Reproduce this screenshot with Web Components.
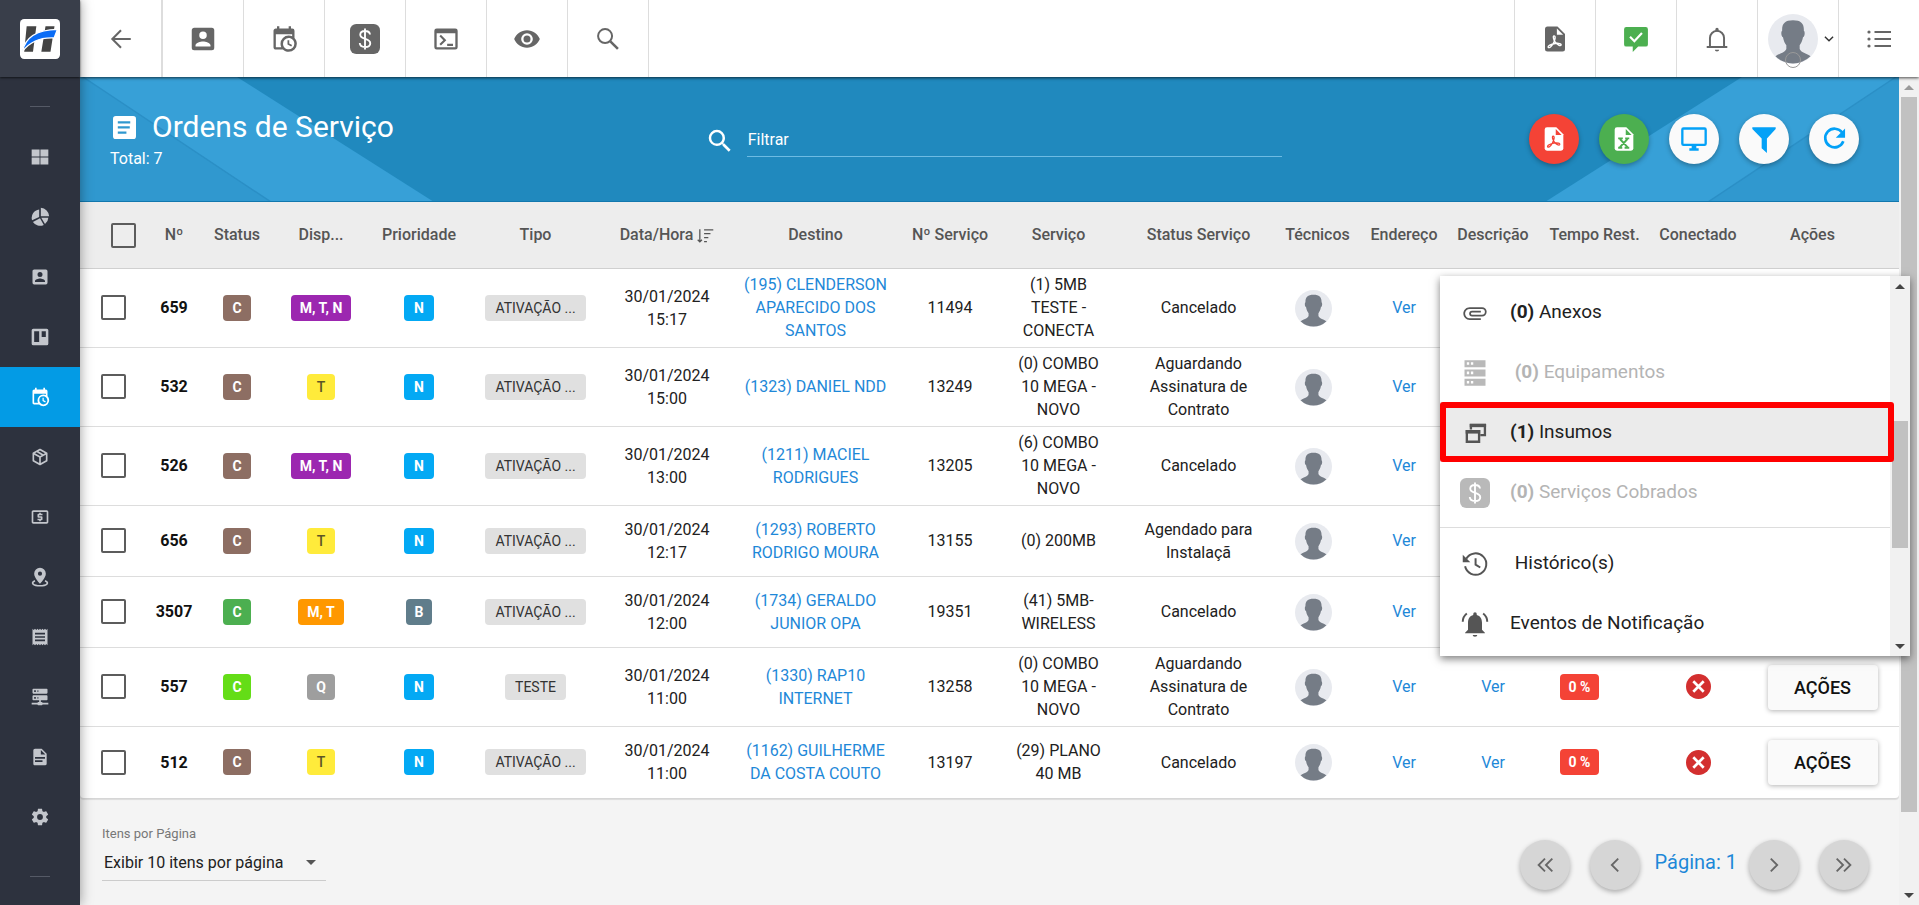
<!DOCTYPE html>
<html lang="pt-BR">
<head>
<meta charset="utf-8">
<meta name="viewport" content="width=device-width, initial-scale=1">
<title>Ordens de Serviço</title>
<style>
  * { box-sizing: border-box; }
  body {
    margin: 0;
    height: 100vh;
    overflow: hidden;
    display: grid;
    grid-template-columns: 80px 1fr;
    grid-template-rows: 77px 1fr;
    background: #f4f4f4;
    color: #212121;
    font: 16px/23px Roboto, "Noto Sans", sans-serif;
  }
  side-nav { grid-row: 1 / 3; z-index: 3; }
  top-bar { z-index: 2; }
  .view { display: flex; min-height: 0; min-width: 0; }
  main { flex: 1; min-width: 0; overflow: hidden; }
</style>
</head>
<body>
  <side-nav></side-nav>
  <top-bar></top-bar>
  <div class="view">
    <main>
      <page-banner heading="Ordens de Serviço" total="7">
        <round-button slot="actions" icon="pdf" label="Exportar PDF" style="--bg:#f44336;--fg:#fff;--cut:#f44336"></round-button>
        <round-button slot="actions" icon="excel" label="Exportar Excel" style="--bg:#4caf50;--fg:#fff;--cut:#4caf50"></round-button>
        <round-button slot="actions" icon="monitor" label="Monitor"></round-button>
        <round-button slot="actions" icon="filter" label="Filtros"></round-button>
        <round-button slot="actions" icon="refresh" label="Atualizar"></round-button>
      </page-banner>
      <orders-table></orders-table>
      <page-footer page="1"></page-footer>
    </main>
    <scroll-rail before="0" thumb="714" after="73" top-idle></scroll-rail>
  </div>

  <actions-menu>
    <menu-entry icon="clip"><b>(0)</b> Anexos</menu-entry>
    <menu-entry icon="server" disabled>&nbsp;<b>(0)</b> Equipamentos</menu-entry>
    <menu-entry icon="copies" current><b>(1)</b> Insumos</menu-entry>
    <menu-entry icon="money" icon-size="30" disabled><b>(0)</b> Serviços Cobrados</menu-entry>
    <hr>
    <menu-entry icon="history">&nbsp;Histórico(s)</menu-entry>
    <menu-entry icon="bellring">Eventos de Notificação</menu-entry>
  </actions-menu>

<script>
// Icon set, all drawn on a 24x24 grid
const ICONS = {
  back: '<path d="M21 12H4M12 4l-8 8 8 8" fill="none" stroke="currentColor" stroke-width="1.9"/>',
  account: '<path d="M6,17C6,15 10,13.9 12,13.9C14,13.9 18,15 18,17V18H6M15,9A3,3 0 0,1 12,12A3,3 0 0,1 9,9A3,3 0 0,1 12,6A3,3 0 0,1 15,9M3,5V19A2,2 0 0,0 5,21H19A2,2 0 0,0 21,19V5A2,2 0 0,0 19,3H5C3.89,3 3,3.9 3,5Z"/>',
  calendar: '<path d="M15,13H16.5V15.82L18.94,17.23L18.19,18.53L15,16.69V13M19,8H5V19H9.67C9.24,18.09 9,17.07 9,16A7,7 0 0,1 16,9C17.07,9 18.09,9.24 19,9.67V8M5,21C3.89,21 3,20.1 3,19V5C3,3.89 3.89,3 5,3H6V1H8V3H16V1H18V3H19A2,2 0 0,1 21,5V11.1C22.24,12.36 23,14.09 23,16A7,7 0 0,1 16,23C14.09,23 12.36,22.24 11.1,21H5M16,11.15A4.85,4.85 0 0,0 11.15,16C11.15,18.68 13.32,20.85 16,20.85A4.85,4.85 0 0,0 20.85,16C20.85,13.32 18.68,11.15 16,11.15Z"/>',
  money: '<rect width="24" height="24" rx="5"/><path d="M16 8.4C15.8 6.6 14.2 5.6 12 5.6S8.2 6.8 8.2 8.6c0 4.2 8 2.4 8 6.7 0 1.9-1.7 3.1-4.1 3.1-2.5 0-4.2-1.200-4.300-3.200M12 3.600v16.800" fill="none" stroke="#fff" stroke-width="1.500"/>',
  terminal: '<path d="M20 3H4a2 2 0 0 0-2 2v14a2 2 0 0 0 2 2h16a2 2 0 0 0 2-2V5a2 2 0 0 0-2-2zm0 16H4V7h16z"/><path d="M7 9l4 4-4 4M13 17h5" fill="none" stroke="currentColor" stroke-width="1.800"/>',
  eye: '<path d="M12,9A3,3 0 0,0 9,12A3,3 0 0,0 12,15A3,3 0 0,0 15,12A3,3 0 0,0 12,9M12,17A5,5 0 0,1 7,12A5,5 0 0,1 12,7A5,5 0 0,1 17,12A5,5 0 0,1 12,17M12,4.5C7,4.5 2.73,7.61 1,12C2.73,16.39 7,19.5 12,19.5C17,19.5 21.27,16.39 23,12C21.27,7.61 17,4.5 12,4.5Z"/>',
  search: '<circle cx="9.500" cy="9.500" r="6" fill="none" stroke="currentColor" stroke-width="1.700"/><path d="M14 14l6.500 6.500" stroke="currentColor" stroke-width="2.200"/>',
  magnify: '<path d="M9.5,3A6.5,6.5 0 0,1 16,9.5C16,11.11 15.41,12.59 14.44,13.73L14.71,14H15.5L20.5,19L19,20.5L14,15.5V14.71L13.73,14.44C12.59,15.41 11.11,16 9.5,16A6.5,6.5 0 0,1 3,9.5A6.5,6.5 0 0,1 9.5,3M9.5,5C7,5 5,7 5,9.5C5,12 7,14 9.5,14C12,14 14,12 14,9.5C14,7 12,5 9.5,5Z"/>',
  pdf: '<path d="M6 2h8l6 6v12a2 2 0 0 1-2 2H6a2 2 0 0 1-2-2V4a2 2 0 0 1 2-2z"/><path d="M13.500 3.500v5h5z" fill="var(--cut,#fff)"/><path d="M11.200 9.500c1.600 0 .9 3.400-.6 6.100-1.300 2.300-3.300 4-4 3.100-.8-1 2.200-2.600 5.400-3.100 3.100-.5 5.300.2 4.900 1.200-.5 1.100-3.200-.2-4.700-2.300-1.500-2-2-5-1-5z" fill="none" stroke="var(--cut,#fff)" stroke-width="1.100"/>',
  excel: '<path d="M6 2h8l6 6v12a2 2 0 0 1-2 2H6a2 2 0 0 1-2-2V4a2 2 0 0 1 2-2z"/><path d="M13.500 3.500v5h5z" fill="var(--cut)"/><path d="M8.500 12l6.500 7M15 12l-6.500 7M7 11.500h4M13 11.500h3.500M7 19.500h3.500M12.500 19.500h4" fill="none" stroke="var(--cut)" stroke-width="1.600"/>',
  monitor: '<path d="M21 2H3a2 2 0 0 0-2 2v12a2 2 0 0 0 2 2h7v2H8v2h8v-2h-2v-2h7a2 2 0 0 0 2-2V4a2 2 0 0 0-2-2zm0 14H3V4h18z"/>',
  filter: '<path d="M2 2h20v1.500l-7.500 8V24L10 20v-8.500l-8-8z"/>',
  refresh: '<path d="M19 6.500A8 8 0 1 0 20 14" fill="none" stroke="currentColor" stroke-width="2.300"/><path d="M21.500 3v8h-8z"/>',
  chat: '<path d="M3 1h18a2 2 0 0 1 2 2v14a2 2 0 0 1-2 2h-7l-5 5v-5H3a2 2 0 0 1-2-2V3a2 2 0 0 1 2-2z"/><path d="M6.500 10l4 4 7-7.500" fill="none" stroke="#fff" stroke-width="2"/>',
  bell: '<path d="M5.500 18.500V11a6.500 6.500 0 0 1 13 0v7.500M2.500 19.400h19" fill="none" stroke="currentColor" stroke-width="1.800"/><path d="M10.500 3a1.500 1.500 0 0 1 3 0v2h-3zM10 22h4a2 1.500 0 0 1-4 0z"/>',
  list: '<path d="M7.500 5H24M7.500 12H24M7.500 19H24" stroke="currentColor" stroke-width="1.800"/><circle cx="2" cy="5" r="1.600"/><circle cx="2" cy="12" r="1.600"/><circle cx="2" cy="19" r="1.600"/>',
  chevron: '<path d="M5 8l7 7 7-7" fill="none" stroke="currentColor" stroke-width="2.400"/>',
  grid: '<path d="M2 3h9.500v8.500H2zM12.500 3H22v8.500h-9.500zM2 12.500h9.500V21H2zM12.500 12.500H22V21h-9.500z"/>',
  pie: '<path d="M13 1a10.500 10.500 0 0 1 10 10H13zM11 3v9l-8.500 4A10 10 0 0 1 11 3zM12 13.500l4.500 8A10 10 0 0 1 3.500 18zM13.500 13H22a10 10 0 0 1-4 7.500z"/>',
  board: '<path d="M4,2H20A2,2 0 0,1 22,4V20A2,2 0 0,1 20,22H4A2,2 0 0,1 2,20V4A2,2 0 0,1 4,2M5,5V18H11V5M14,5V12H19V5Z" fill-rule="evenodd"/>',
  box: '<path d="M21,16.5C21,16.88 20.79,17.21 20.47,17.38L12.57,21.82C12.41,21.94 12.21,22 12,22C11.79,22 11.59,21.94 11.43,21.82L3.53,17.38C3.21,17.21 3,16.88 3,16.5V7.5C3,7.12 3.21,6.79 3.53,6.62L11.43,2.18C11.59,2.06 11.79,2 12,2C12.21,2 12.41,2.06 12.57,2.18L20.47,6.62C20.79,6.79 21,7.12 21,7.5V16.5M12,4.15L10.11,5.22L16,8.61L17.96,7.5L12,4.15M6.04,7.5L12,10.85L13.96,9.75L8.08,6.35L6.04,7.5M5,15.91L11,19.29V12.58L5,9.21V15.91M19,15.91V9.21L13,12.58V19.29L19,15.91Z"/>',
  cash: '<path d="M11 17h2v-1h1c.55 0 1-.45 1-1v-3c0-.55-.45-1-1-1h-3v-1h4V8h-2V7h-2v1h-1c-.55 0-1 .45-1 1v3c0 .55.45 1 1 1h3v1H9v2h2v1zm9-13H4c-1.110 0-1.990.890-1.990 2L2 18c0 1.110.890 2 2 2h16c1.110 0 2-.890 2-2V6c0-1.110-.890-2-2-2zm0 14H4V6h16v12z"/>',
  pin: '<path d="M12 1a7 7 0 0 0-7 7c0 5 7 12 7 12s7-7 7-12a7 7 0 0 0-7-7zm0 9.500a2.500 2.500 0 1 1 0-5 2.500 2.500 0 0 1 0 5z"/><path d="M6 16.500c-6 2.500-2 6 6 6s12-3.500 6-6" fill="none" stroke="currentColor" stroke-width="2"/>',
  receipt: '<path d="M18 17H6v-2h12v2zm0-4H6v-2h12v2zm0-4H6V7h12v2zM3 22l1.500-1.500L6 22l1.500-1.500L9 22l1.500-1.500L12 22l1.500-1.500L15 22l1.500-1.500L18 22l1.500-1.500L21 22V2l-1.500 1.500L18 2l-1.500 1.500L15 2l-1.500 1.500L12 2l-1.500 1.500L9 2 7.500 3.500 6 2 4.500 3.500 3 2v20z"/>',
  network: '<path d="M13,18H14A1,1 0 0,1 15,19H22V21H15A1,1 0 0,1 14,22H10A1,1 0 0,1 9,21H2V19H9A1,1 0 0,1 10,18H11V16H4A1,1 0 0,1 3,15V11A1,1 0 0,1 4,10H20A1,1 0 0,1 21,11V15A1,1 0 0,1 20,16H13V18M4,2H20A1,1 0 0,1 21,3V7A1,1 0 0,1 20,8H4A1,1 0 0,1 3,7V3A1,1 0 0,1 4,2M9,6H10V4H9V6M9,14H10V12H9V14M5,4V6H7V4H5M5,12V14H7V12H5Z"/>',
  document: '<path d="M13,9H18.5L13,3.5V9M6,2H14L20,8V20A2,2 0 0,1 18,22H6C4.89,22 4,21.1 4,20V4C4,2.89 4.89,2 6,2M15,18V16H6V18H15M18,14V12H6V14H18Z"/>',
  gear: '<path d="M12,15.5A3.5,3.5 0 0,1 8.5,12A3.5,3.5 0 0,1 12,8.5A3.5,3.5 0 0,1 15.5,12A3.5,3.5 0 0,1 12,15.5M19.43,12.97C19.47,12.65 19.5,12.33 19.5,12C19.5,11.67 19.47,11.34 19.43,11L21.54,9.37C21.73,9.22 21.78,8.95 21.66,8.73L19.66,5.27C19.54,5.05 19.27,4.96 19.05,5.05L16.56,6.05C16.04,5.66 15.5,5.32 14.87,5.07L14.5,2.42C14.46,2.18 14.25,2 14,2H10C9.75,2 9.54,2.18 9.5,2.42L9.13,5.07C8.5,5.32 7.96,5.66 7.44,6.05L4.95,5.05C4.73,4.96 4.46,5.05 4.34,5.27L2.34,8.73C2.21,8.95 2.27,9.22 2.46,9.37L4.57,11C4.53,11.34 4.5,11.67 4.5,12C4.5,12.33 4.53,12.65 4.57,12.97L2.46,14.63C2.27,14.78 2.21,15.05 2.34,15.27L4.34,18.73C4.46,18.95 4.73,19.03 4.95,18.95L7.44,17.94C7.96,18.34 8.5,18.68 9.13,18.93L9.5,21.58C9.54,21.82 9.75,22 10,22H14C14.25,22 14.46,21.82 14.5,21.58L14.87,18.93C15.5,18.67 16.04,18.34 16.56,17.94L19.05,18.95C19.27,19.03 19.54,18.95 19.66,18.73L21.66,15.27C21.78,15.05 21.73,14.78 21.54,14.63L19.43,12.97Z"/>',
  article: '<path d="M3 0h18a3 3 0 0 1 3 3v18a3 3 0 0 1-3 3H3a3 3 0 0 1-3-3V3a3 3 0 0 1 3-3zM5 5.500v2.200h13V5.500zM5 10.800V13h12.500v-2.200zM5 16.200v2.200h9v-2.200z" fill-rule="evenodd"/>',
  sort: '<path d="M4 3v18M1 18l3 3 3-3M10 4h13M10 9.500h9M10 15h6M10 20.500h4" fill="none" stroke="currentColor" stroke-width="1.800"/>',
  clip: '<path d="M2,12.5C2,9.46 4.46,7 7.5,7H18A4,4 0 0,1 22,11A4,4 0 0,1 18,15H9.5A2.5,2.5 0 0,1 7,12.5A2.5,2.5 0 0,1 9.5,10H17V11.5H9.5A1,1 0 0,0 8.5,12.5A1,1 0 0,0 9.5,13.5H18A2.5,2.5 0 0,0 20.5,11A2.5,2.5 0 0,0 18,8.5H7.5A4,4 0 0,0 3.5,12.5A4,4 0 0,0 7.5,16.5H17V18H7.5C4.46,18 2,15.54 2,12.5Z"/>',
  server: '<path d="M3 1h18v6H3zM3 9h18v6H3zM3 17h18v6H3z"/><path d="M5 2.800h2v2.200H5zM8.500 2.800h2v2.200h-2zM5 10.800h2V13H5zM8.500 10.800h2V13h-2zM5 18.800h2V21H5zM8.500 18.800h2V21h-2z" fill="#fff"/>',
  copies: '<path d="M8.500 9V5.200h12v8.600h-4" fill="none" stroke="currentColor" stroke-width="2"/><path d="M7.500 4h14v3h-14z"/><path d="M5 10.500h10.500v9H5z" fill="none" stroke="currentColor" stroke-width="2"/><path d="M4 9.500h12.500v3H4z"/>',
  history: '<path d="M4.500 7.500A9.200 9.200 0 1 1 3.500 14M12.500 7v5.500l4 2.500" fill="none" stroke="currentColor" stroke-width="1.700"/><path d="M1.500 4v6.500H8z"/>',
  bellring: '<path d="M12 2a1.500 1.500 0 0 1 1.500 1.500v.7c3 .7 4.500 3.300 4.500 6.800v6l2.500 2.500v.5h-17v-.500L6 17v-6c0-3.500 1.500-6.100 4.500-6.800v-.700A1.500 1.500 0 0 1 12 2zM10 21.500h4a2 1.500 0 0 1-4 0z"/><path d="M1.500 10c0-3 1-5 3.500-7M22.500 10c0-3-1-5-3.500-7" fill="none" stroke="currentColor" stroke-width="1.700"/>',
  offline: '<circle cx="12" cy="12" r="12" fill="#d32f2f"/><path d="M7 7l10 10M17 7L7 17" stroke="#fff" stroke-width="2.600"/>',
  avatar: '<circle cx="12" cy="12" r="12" fill="#e8eaef"/><path d="M12 3c4 0 5.400 1.800 5.200 5 .6.300.6 2.600-.4 3.200-.3 1.800-1 3-1.600 3.800v1.800c.8 1.900 3.600 2.200 5.200 3.500a12 12 0 0 1-16.800 0c1.600-1.300 4.400-1.600 5.200-3.500V15c-.7-.8-1.300-2-1.600-3.800-1-.6-1-2.900-.4-3.200C6.600 4.800 8 3 12 3z" fill="#757c86"/>',
  left: '<path d="M15.500 5l-7 7 7 7" fill="none" stroke="currentColor" stroke-width="2"/>',
  right: '<path d="M8.500 5l7 7-7 7" fill="none" stroke="currentColor" stroke-width="2"/>',
  first: '<path d="M12 5l-7 7 7 7M20 5l-7 7 7 7" fill="none" stroke="currentColor" stroke-width="2"/>',
  last: '<path d="M4 5l7 7-7 7M12 5l7 7-7 7" fill="none" stroke="currentColor" stroke-width="2"/>',
  logo: '<rect width="24" height="24" rx="2.500" fill="#fff"/><path d="M4 4.300h5.800L7.800 19.600H2.500zM15.300 4.300h5.400L18.300 19.600h-5.500z" fill="#444"/><path d="M1.500 19.500C3 11.500 9 6.500 22.500 6.200l-2 5.200C12 11 6 13.500 1.500 19.500z" fill="#0a6cf5" stroke="#fff" stroke-width=".8"/>',
};

const BASE = '*{box-sizing:border-box} a{color:inherit;text-decoration:none} button{font:inherit;color:inherit;background:none;border:0;padding:0;cursor:pointer}';

function mount(el, html) {
  el.attachShadow({ mode: 'open' }).innerHTML = html;
}

/** <app-icon name size> */
class AppIcon extends HTMLElement {
  connectedCallback() {
    if (this.shadowRoot) return;
    const size = this.getAttribute('size') || 24;
    mount(this, `
      <style>:host { display: inline-flex; flex: none; } svg { display: block; fill: currentColor; }</style>
      <svg width="${size}" height="${size}" viewBox="0 0 24 24" aria-hidden="true">${ICONS[this.getAttribute('name')]}</svg>`);
  }
}

/** Round floating button used by the banner and the pager */
class RoundButton extends HTMLElement {
  connectedCallback() {
    if (this.shadowRoot) return;
    mount(this, `
      <style>${BASE}
        :host { display: block; }
        button {
          width: 50px; height: 50px; border-radius: 50%;
          display: grid; place-items: center;
          background: var(--bg, #fafafa); color: var(--fg, #03a1f7);
          box-shadow: 0 2px 5px rgba(0,0,0,.3);
        }
      </style>
      <button type="button" aria-label="${this.getAttribute('label')}">
        <app-icon name="${this.getAttribute('icon')}" size="${this.getAttribute('size') || 28}"></app-icon>
      </button>`);
  }
}

/** Drawn scrollbar; before/thumb/after are relative lengths */
class ScrollRail extends HTMLElement {
  connectedCallback() {
    if (this.shadowRoot) return;
    const at = n => this.getAttribute(n);
    mount(this, `
      <style>
        :host { display: flex; flex-direction: column; flex: none; width: 20px; background: #f1f1f1; }
        .arrow { height: 20px; display: grid; place-items: center; }
        .arrow::before { content: ""; border: 5px solid transparent; border-top: 0; border-bottom-color: #444; }
        .arrow.down::before { border: 5px solid transparent; border-bottom: 0; border-top-color: #444; }
        :host([top-idle]) .arrow.up::before { border-bottom-color: #999; }
        .thumb { background: #c1c1c1; margin: 0 2px; }
      </style>
      <div class="arrow up"></div>
      <div style="flex:${at('before')}"></div>
      <div class="thumb" style="flex:${at('thumb')}"></div>
      <div style="flex:${at('after')}"></div>
      <div class="arrow down"></div>`);
  }
}

class SideNav extends HTMLElement {
  connectedCallback() {
    const items = [
      ['grid', 'Painel'], ['pie', 'Relatórios'], ['account', 'Clientes'], ['board', 'Quadro'],
      ['calendar', 'Ordens de Serviço'], ['box', 'Estoque'], ['cash', 'Financeiro'], ['pin', 'Mapa'],
      ['receipt', 'Faturas'], ['network', 'Rede'], ['document', 'Documentos'], ['gear', 'Configurações'],
    ];
    mount(this, `
      <style>${BASE}
        :host { display: flex; flex-direction: column; background: #2d323e; color: #c3c6cc; box-shadow: 0 0 12px rgba(0,0,0,.4); min-height: 0; }
        .brand { flex: none; height: 77px; display: grid; place-items: center; background: #393e4a; box-shadow: 0 1px 2px rgba(0,0,0,.6); }
        nav { flex: 1; padding-top: 29px; overflow: hidden; }
        hr { width: 20px; margin: 0 auto 20px; border: 0; border-top: 1px solid #555a66; }
        .end { margin-top: 29px; }
        a { height: 60px; display: grid; place-items: center; }
        .on { background: #039be5; color: #fff; }
      </style>
      <a class="brand" href="#" aria-label="Início"><app-icon name="logo" size="40"></app-icon></a>
      <nav>
        <hr>
        ${items.map(([icon, label], i) =>
          `<a href="#" aria-label="${label}"${i === 4 ? ' class="on"' : ''}><app-icon name="${icon}" size="20"></app-icon></a>`).join('')}
        <hr class="end">
      </nav>`);
  }
}

class TopBar extends HTMLElement {
  connectedCallback() {
    const left = [['back', 26], ['account', 30], ['calendar', 28], ['money', 30], ['terminal', 28], ['eye', 28], ['search', 28]];
    mount(this, `
      <style>${BASE}
        :host { display: flex; justify-content: space-between; background: #fff; color: #666; box-shadow: 0 1px 3px rgba(0,0,0,.7); }
        div { display: flex; }
        button { width: 81px; display: flex; align-items: center; justify-content: center; border-right: 1px solid #ddd; }
        button:first-child { width: 83px; border-right-width: 2px; }
        .end button { width: 81px; border: 0; border-left: 1px solid #ddd; }
        .ok { color: #4caf50; }
        .end .user { gap: 4px; justify-content: flex-start; padding-left: 10px; color: #333; }
        .face { display: grid; justify-items: center; align-items: end; }
        .face > * { grid-area: 1 / 1; }
        .ring { width: 16px; height: 16px; margin-bottom: -4px; border: 1px solid #999; border-radius: 50%; }
      </style>
      <div>${left.map(([n, s]) => `<button type="button" aria-label="${n}"><app-icon name="${n}" size="${s}"></app-icon></button>`).join('')}</div>
      <div class="end">
        <button type="button" aria-label="PDF"><app-icon name="pdf" size="30"></app-icon></button>
        <button type="button" aria-label="Mensagens" class="ok"><app-icon name="chat" size="26"></app-icon></button>
        <button type="button" aria-label="Notificações"><app-icon name="bell" size="26"></app-icon></button>
        <button type="button" aria-label="Usuário" class="user">
          <span class="face"><app-icon name="avatar" size="50"></app-icon><span class="ring"></span></span>
          <app-icon name="chevron" size="14"></app-icon>
        </button>
        <button type="button" aria-label="Lista"><app-icon name="list" size="24"></app-icon></button>
      </div>`);
  }
}

class PageBanner extends HTMLElement {
  connectedCallback() {
    // Diagonal stripes hug each side of the banner; the right one is mirrored
    const stripes = `
      <path d="M0 0L4 0L191 125H0z" fill="#3098cf"/>
      <path d="M3 0H157L354 125H191z" fill="#37a0d7"/>
      <path d="M3 0L191 125" stroke="#2b8fc6" stroke-width="1.500"/>`;
    mount(this, `
      <style>${BASE}
        :host { display: grid; height: 125px; background: #2089be; color: #fff; border-bottom: 1px solid #1278ae; }
        .art, .row { grid-area: 1 / 1; }
        .art { display: flex; justify-content: space-between; overflow: hidden; }
        .art .flip { transform: scaleX(-1); }
        .row { z-index: 1; display: grid; grid-template-columns: 34fr 33fr 33fr; align-items: center; padding: 0 40px 0 30px; }
        h1 { display: flex; align-items: center; gap: 16px; margin: 0 0 4px; padding-left: 3px; font-size: 30px; line-height: 36px; font-weight: 400; }
        p { margin: 0; line-height: 20px; }
        label { display: flex; align-items: center; gap: 12px; padding-top: 4px; }
        input { flex: 1; min-width: 0; height: 32px; padding: 0 0 2px 1px; border: 0; border-bottom: 1px solid #6dbbe3; outline: 0; background: none; color: #fff; font: inherit; }
        input::placeholder { color: #fff; opacity: 1; }
        .tools { display: flex; justify-content: flex-end; gap: 20px; }
      </style>
      <div class="art">
        <svg width="354" height="125">${stripes}</svg>
        <svg class="flip" width="354" height="125">${stripes}</svg>
      </div>
      <div class="row">
        <div>
          <h1><app-icon name="article" size="23"></app-icon>${this.getAttribute('heading')}</h1>
          <p>Total: ${this.getAttribute('total')}</p>
        </div>
        <label><app-icon name="magnify" size="30"></app-icon><input type="text" placeholder="Filtrar" aria-label="Filtrar"></label>
        <div class="tools"><slot name="actions"></slot></div>
      </div>`);
  }
}

/** Small coloured label */
class ColorTag extends HTMLElement {
  connectedCallback() {
    if (this.shadowRoot) return;
    mount(this, `
      <style>
        :host { display: inline-block; vertical-align: middle; padding: 0 9px; border-radius: 4px; font-size: 14px; line-height: 26px; font-weight: 700; white-space: nowrap; color: #fff; }
        :host([tone="brown"]) { background: #8d6e63; }
        :host([tone="green"]) { background: #4caf50; }
        :host([tone="lime"]) { background: #64dd17; }
        :host([tone="purple"]) { background: #9c27b0; }
        :host([tone="yellow"]) { padding: 0 10px; background: #ffeb3b; color: #5c5526; font-weight: 500; }
        :host([tone="orange"]) { background: #ff9800; }
        :host([tone="gray"]) { background: #9e9e9e; }
        :host([tone="blue"]) { padding: 0 10px; background: #03a9f4; }
        :host([tone="slate"]) { background: #607d8b; }
        :host([tone="red"]) { background: #f44336; }
        :host([tone="plain"]) { padding: 0 10px; background: #e0e0e0; color: #333; font-weight: 400; }
      </style><slot></slot>`);
  }
}

const COLUMNS = [
  ['', 66], ['Nº', 56], ['Status', 70], ['Disp...', 98], ['Prioridade', 98], ['Tipo', 135], ['Data/Hora', 128],
  ['Destino', 169], ['Nº Serviço', 100], ['Serviço', 117], ['Status Serviço', 163], ['Técnicos', 75],
  ['Endereço', 98], ['Descrição', 80], ['Tempo Rest.', 123], ['Conectado', 84], ['Ações', 159],
];

const ORDERS = [
  { id: 659, status: 'brown', shift: ['purple', 'M, T, N'], priority: 'N', type: 'ATIVAÇÃO ...', date: '30/01/2024 15:17', target: '(195) CLENDERSON APARECIDO DOS SANTOS', service: 11494, plan: '(1) 5MB TESTE - CONECTA', state: 'Cancelado' },
  { id: 532, status: 'brown', shift: ['yellow', 'T'], priority: 'N', type: 'ATIVAÇÃO ...', date: '30/01/2024 15:00', target: '(1323) DANIEL NDD', service: 13249, plan: '(0) COMBO 10 MEGA - NOVO', state: 'Aguardando Assinatura de Contrato' },
  { id: 526, status: 'brown', shift: ['purple', 'M, T, N'], priority: 'N', type: 'ATIVAÇÃO ...', date: '30/01/2024 13:00', target: '(1211) MACIEL RODRIGUES', service: 13205, plan: '(6) COMBO 10 MEGA - NOVO', state: 'Cancelado' },
  { id: 656, status: 'brown', shift: ['yellow', 'T'], priority: 'N', type: 'ATIVAÇÃO ...', date: '30/01/2024 12:17', target: '(1293) ROBERTO RODRIGO MOURA', service: 13155, plan: '(0) 200MB', state: 'Agendado para Instalaçã' },
  { id: 3507, status: 'green', shift: ['orange', 'M, T'], priority: 'B', type: 'ATIVAÇÃO ...', date: '30/01/2024 12:00', target: '(1734) GERALDO JUNIOR OPA', service: 19351, plan: '(41) 5MB-WIRELESS', state: 'Cancelado' },
  { id: 557, status: 'lime', shift: ['gray', 'Q'], priority: 'N', type: 'TESTE', date: '30/01/2024 11:00', target: '(1330) RAP10 INTERNET', service: 13258, plan: '(0) COMBO 10 MEGA - NOVO', state: 'Aguardando Assinatura de Contrato', left: '0 %' },
  { id: 512, status: 'brown', shift: ['yellow', 'T'], priority: 'N', type: 'ATIVAÇÃO ...', date: '30/01/2024 11:00', target: '(1162) GUILHERME DA COSTA COUTO', service: 13197, plan: '(29) PLANO 40 MB', state: 'Cancelado', left: '0 %' },
];

class OrdersTable extends HTMLElement {
  _row(o) {
    return `<tr>
      <td><input type="checkbox" aria-label="Selecionar ${o.id}"></td>
      <td><b>${o.id}</b></td>
      <td><color-tag tone="${o.status}">C</color-tag></td>
      <td><color-tag tone="${o.shift[0]}">${o.shift[1]}</color-tag></td>
      <td><color-tag tone="${o.priority === 'B' ? 'slate' : 'blue'}">${o.priority}</color-tag></td>
      <td><color-tag tone="plain">${o.type}</color-tag></td>
      <td class="date">${o.date}</td>
      <td><a href="#">${o.target}</a></td>
      <td>${o.service}</td>
      <td class="plan">${o.plan}</td>
      <td class="state">${o.state}</td>
      <td class="tech"><app-icon name="avatar" size="37"></app-icon></td>
      <td><a href="#">Ver</a></td>
      ${o.left ? `<td><a href="#">Ver</a></td>
      <td class="left"><color-tag tone="red">${o.left}</color-tag></td>
      <td><app-icon name="offline" size="25"></app-icon></td>
      <td class="act"><button type="button">AÇÕES</button></td>` : '<td></td><td></td><td></td><td></td>'}
    </tr>`;
  }

  connectedCallback() {
    const head = COLUMNS.map(([name], i) => {
      if (i === 0) return '<th class="pick"><input type="checkbox" aria-label="Selecionar todos"></th>';
      const sort = name === 'Data/Hora' ? ' <app-icon name="sort" size="17"></app-icon>' : '';
      return `<th${name === 'Ações' ? ' class="last"' : ''}>${name}${sort}</th>`;
    }).join('');
    mount(this, `
      <style>${BASE}
        :host { display: block; background: #fff; border-bottom: 1px solid #d6d6d6; border-radius: 0 0 4px 4px; box-shadow: 0 1px 1px rgba(0,0,0,.1); }
        table { width: 100%; table-layout: fixed; border-collapse: separate; border-spacing: 0; text-align: center; }
        th { height: 67px; padding: 0 0 2px; background: #ededed; color: #555; font-weight: 500; white-space: nowrap; border-bottom: 1px solid #d0d0d0; }
        .pick { padding: 0 0 0 20px; }
        .last { padding-right: 14px; }
        td { height: 71px; padding: 4px 10px 5px; border-bottom: 1px solid #ddd; }
        tr:last-child td { border-bottom: 0; }
        td:nth-child(-n+6), td:nth-child(n+14) { padding-left: 0; padding-right: 0; }
        b { font-weight: 700; color: #111; }
        a { color: #1e88d8; }
        td.date, td.plan, td.state { padding-left: 16px; padding-right: 16px; }
        td.tech { padding: 0 9px 0 0; }
        td.left { padding-right: 30px; }
        app-icon { vertical-align: middle; }
        td.act { padding: 0 0 0 6px; }
        .act button { width: 110px; height: 45px; border-radius: 4px; background: #fafafa; color: #111; font-size: 18px; font-weight: 500; box-shadow: 0 1px 5px rgba(0,0,0,.3); }
        input {
          appearance: none; display: inline-block; vertical-align: middle;
          width: 25px; height: 25px; margin: 0; border: 2px solid #5c5c5c; border-radius: 2px;
        }
      </style>
      <table>
        <colgroup>${COLUMNS.map(([, w]) => `<col style="width:${w}px">`).join('')}</colgroup>
        <thead><tr>${head}</tr></thead>
        <tbody>${ORDERS.map(o => this._row(o)).join('')}</tbody>
      </table>`);
  }
}

class PageFooter extends HTMLElement {
  connectedCallback() {
    mount(this, `
      <style>${BASE}
        :host { display: flex; justify-content: space-between; align-items: flex-start; padding: 25px 30px 0 22px; }
        .size { display: grid; width: 224px; }
        label { font-size: 13px; line-height: 20px; color: #777; }
        .field { display: flex; align-items: center; border-bottom: 1px solid #ccc; }
        select { appearance: none; flex: 1; height: 36px; padding: 0 0 0 2px; border: 0; outline: 0; background: none; color: #212121; font: inherit; }
        .field::after { content: ""; margin-right: 10px; border: 5px solid transparent; border-bottom: 0; border-top-color: #555; }
        .pager { display: flex; align-items: center; gap: 20px; padding-top: 16px; --bg: #d6d6d6; --fg: #666; }
        .pages { display: flex; align-items: center; gap: 12px; }
        a { color: #1e88d8; font-size: 20px; line-height: 24px; padding: 0 0 6px 3px; }
      </style>
      <div class="size">
        <label for="size">Itens por Página</label>
        <div class="field"><select id="size"><option>Exibir 10 itens por página</option></select></div>
      </div>
      <div class="pager">
        <round-button icon="first" size="22" label="Primeira página"></round-button>
        <div class="pages">
          <round-button icon="left" size="22" label="Página anterior"></round-button>
          <a href="#">Página: ${this.getAttribute('page')}</a>
          <round-button icon="right" size="22" label="Próxima página"></round-button>
        </div>
        <round-button icon="last" size="22" label="Última página"></round-button>
      </div>`);
  }
}

class MenuEntry extends HTMLElement {
  connectedCallback() {
    const size = this.getAttribute('icon-size') || 28;
    mount(this, `
      <style>${BASE}
        :host { display: block; }
        button { position: relative; width: 100%; height: 60px; padding: 0 20px 0 18px; display: flex; align-items: center; gap: 18px; text-align: left; font-size: 19px; line-height: 28px; color: #212121; }
        .icon { width: 34px; display: grid; place-items: center; padding-top: 2px; color: #555; }
        ::slotted(b) { font-weight: 700; }
        button:disabled { color: #b4b4b4; }
        button:disabled .icon { color: #b9b9b9; }
        :host([current]) button { background: #ebebeb; }
        /* marker frame runs a little over the menu's scrollbar */
        :host([current]) button::after { content: ""; position: absolute; inset: 0 -4px 0 0; border: 6px solid #f00; border-radius: 3px; z-index: 1; }
      </style>
      <button type="button" role="menuitem"${this.hasAttribute('disabled') ? ' disabled' : ''}>
        <span class="icon"><app-icon name="${this.getAttribute('icon')}" size="${size}"></app-icon></span>
        <span class="text"><slot></slot></span>
      </button>`);
  }
}

class ActionsMenu extends HTMLElement {
  connectedCallback() {
    mount(this, `
      <style>${BASE}
        :host { position: absolute; top: 276px; right: 9px; z-index: 5; display: flex; width: 470px; height: 380px; background: #fff; box-shadow: 0 3px 8px rgba(0,0,0,.5); }
        .list { flex: 1; padding-top: 6px; }
        ::slotted(hr) { margin: 5px 0; border: 0; border-top: 1px solid #ddd; }
      </style>
      <div class="list" role="menu"><slot></slot></div>
      <scroll-rail before="124" thumb="127" after="87"></scroll-rail>`);
  }
}

customElements.define('app-icon', AppIcon);
customElements.define('round-button', RoundButton);
customElements.define('scroll-rail', ScrollRail);
customElements.define('color-tag', ColorTag);
customElements.define('side-nav', SideNav);
customElements.define('top-bar', TopBar);
customElements.define('page-banner', PageBanner);
customElements.define('orders-table', OrdersTable);
customElements.define('page-footer', PageFooter);
customElements.define('menu-entry', MenuEntry);
customElements.define('actions-menu', ActionsMenu);
</script>
</body>
</html>
